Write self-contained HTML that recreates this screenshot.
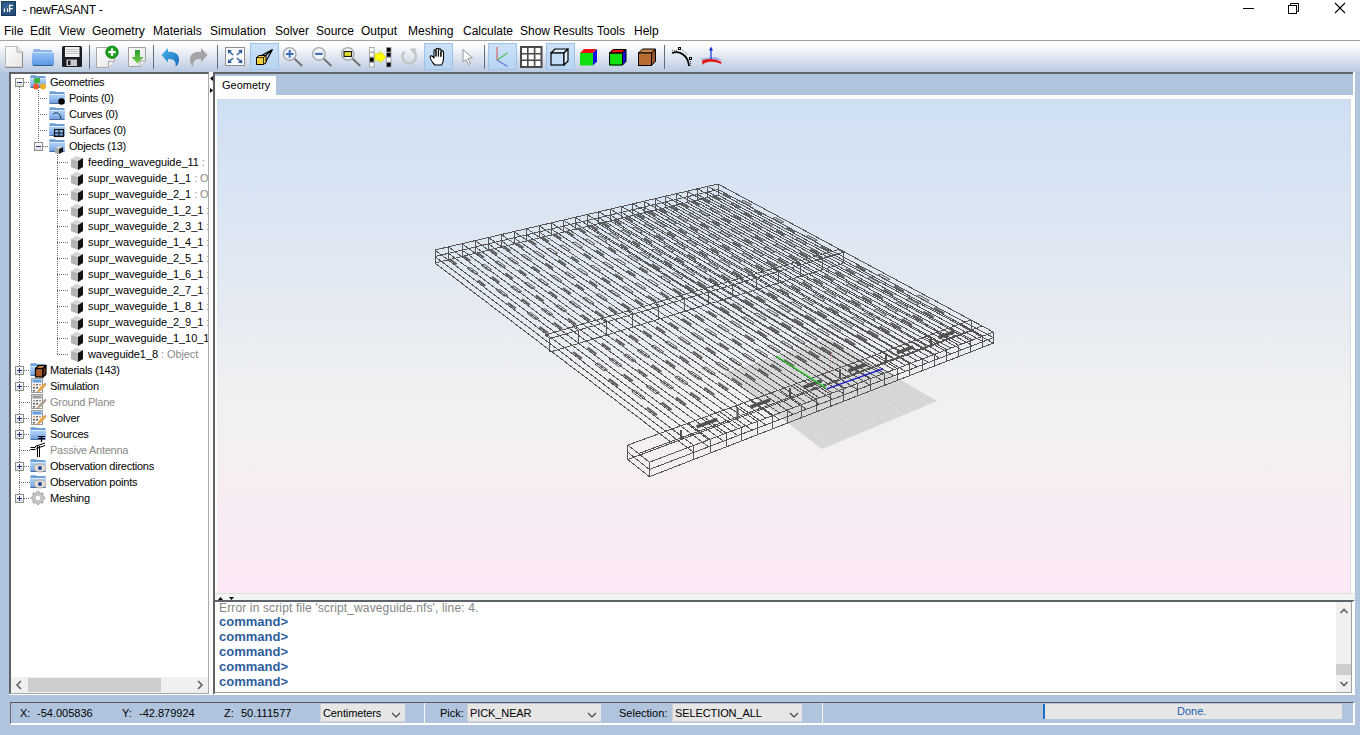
<!DOCTYPE html>
<html><head><meta charset="utf-8">
<style>
*{box-sizing:border-box;margin:0;padding:0}
html,body{width:1360px;height:735px;overflow:hidden;background:#b0c4de;font-family:"Liberation Sans",sans-serif;position:relative}
.a{position:absolute}
.t{position:absolute;white-space:pre;line-height:1}
#top{left:0;top:0;width:1360px;height:40px;background:#fff}
#sep40{left:0;top:40px;width:1360px;height:1px;background:#a0a0a0}
#tb{left:0;top:41px;width:1360px;height:31px;background:linear-gradient(#ffffff 0px,#fbfcfd 5px,#e4eaf3 14px,#c6d3e6 26px,#b9cae2 31px)}
.menu{font-size:12px;color:#000;top:25px}
.tsep{position:absolute;top:45px;width:1px;height:24px;background:#5f6f80}
.act{position:absolute;top:43px;height:27px;background:linear-gradient(#cde2f8,#b6d4f2);border:1px solid #9ec2e8}
#tree{left:9px;top:72px;width:200px;height:622px;background:#fff;border-top:2px solid #5e636a;border-left:2px solid #5e636a;border-right:1px solid #a8a8a8;border-bottom:1px solid #a8a8a8;overflow:hidden}
#split{left:209px;top:72px;width:4px;height:623px;background:#fbfbfb}
#rp{left:213px;top:72px;width:1142px;height:528px;background:#b0c4de;border-top:2px solid #5e636a;border-left:2px solid #5e636a}
#rpr{left:1353px;top:72px;width:2px;height:528px;background:#fff}
#tab{left:215px;top:76px;width:61px;height:20px;background:#fff}
#vpwrap{left:215px;top:95px;width:1138px;height:505px;background:#fff}
#vp{left:217px;top:99px;width:1133px;height:495px;background:linear-gradient(#cfdff3 0%,#d9e5f3 20%,#e4eaf2 40%,#f1f1f1 62%,#f6edf3 80%,#fde8f6 100%)}
#vpb{left:215px;top:593px;width:1140px;height:7px;background:#f4f4f4;border-top:1px solid #dedede}
#con{left:213px;top:600px;width:1142px;height:95px;background:#fff;border-top:2px solid #5e636a;border-left:2px solid #5e636a;border-right:3px solid #fff;border-bottom:2px solid #fff}
#conin{left:1351px;top:602px;width:1px;height:91px;background:#a0a0a0}
#conb{left:215px;top:692px;width:1137px;height:1px;background:#a0a0a0}
.tr{font-size:11px;color:#000;letter-spacing:-0.25px}
.g{color:#8a8a8a}
.cmd{font-size:13px;font-weight:bold;color:#2d5e9c;letter-spacing:0px;left:219px}
#status{left:10px;top:702px;width:1345px;height:23px;border-top:1px solid #5a5a5a;border-left:1px solid #6a6a6a;border-bottom:2px solid #fff;border-right:2px solid #fff}
.st{font-size:11px;color:#000;top:708px}
.combo{position:absolute;top:704px;height:18px;background:#e6e6e6;border-left:1px solid #d0d0d0;border-bottom:1px solid #d4d4d4}
.combo span{position:absolute;left:2px;top:4px;font-size:11px;white-space:pre;line-height:1;letter-spacing:-0.1px}
.combo svg{position:absolute;top:8px}
</style></head><body>
<div id="top" class="a"></div>
<!-- title -->
<svg class="a" style="left:0;top:0" width="18" height="18"><defs><radialGradient id="ig" cx="0.4" cy="0.4" r="0.7"><stop offset="0" stop-color="#3a6c9c"/><stop offset="1" stop-color="#1e4670"/></radialGradient></defs><rect x="1" y="1" width="15" height="15" fill="url(#ig)"/><rect x="1.5" y="1.5" width="14" height="14" fill="none" stroke="#1a3658" stroke-width="0.8"/><path d="M4.4 8.5 V12 M7.5 8.5 V12 M9.6 12 V5.4 H12.9 M9.6 8.6 H12.6" fill="none" stroke="#fff" stroke-width="1.2"/></svg>
<div class="t" style="left:19.5px;top:4px;font-size:12px;color:#000;letter-spacing:-0.25px"> - newFASANT -</div>
<!-- window controls -->
<svg class="a" style="left:1240px;top:0px" width="120" height="18">
 <line x1="3" y1="8.5" x2="14" y2="8.5" stroke="#000" stroke-width="1"/>
 <rect x="48.5" y="5.5" width="8" height="8" fill="none" stroke="#000"/>
 <path d="M50.5 5.5 V3.5 H58.5 V11.5 H56.5" fill="none" stroke="#000"/>
 <path d="M95 3 L105 13 M105 3 L95 13" stroke="#000" stroke-width="1.1"/>
</svg>
<!-- menu -->
<div class="t menu" style="left:4px">File</div>
<div class="t menu" style="left:30px">Edit</div>
<div class="t menu" style="left:59px">View</div>
<div class="t menu" style="left:92px">Geometry</div>
<div class="t menu" style="left:153px">Materials</div>
<div class="t menu" style="left:210px">Simulation</div>
<div class="t menu" style="left:275px">Solver</div>
<div class="t menu" style="left:316px">Source</div>
<div class="t menu" style="left:361px">Output</div>
<div class="t menu" style="left:408px">Meshing</div>
<div class="t menu" style="left:463px">Calculate</div>
<div class="t menu" style="left:520px">Show Results</div>
<div class="t menu" style="left:597px">Tools</div>
<div class="t menu" style="left:634px">Help</div>
<div id="sep40" class="a"></div>
<div id="tb" class="a"></div>
<!-- TOOLBAR -->
<div class="tsep" style="left:89px"></div>
<div class="tsep" style="left:153px"></div>
<div class="tsep" style="left:217px"></div>
<div class="tsep" style="left:484px"></div>
<div class="tsep" style="left:664px"></div>
<div class="act" style="left:250px;width:29px"></div>
<div class="act" style="left:424px;width:29px"></div>
<div class="act" style="left:488px;width:29px"></div>
<div class="act" style="left:546px;width:29px"></div>
<svg class="a" style="left:0;top:0" width="740" height="75"><defs>
<linearGradient id="tfold" x1="0" y1="0" x2="0" y2="1"><stop offset="0" stop-color="#9cc6f6"/><stop offset="1" stop-color="#5b9ae6"/></linearGradient>
<linearGradient id="tpage" x1="0" y1="0" x2="1" y2="1"><stop offset="0" stop-color="#ffffff"/><stop offset="1" stop-color="#e4e4e4"/></linearGradient>
<linearGradient id="tgreen" x1="0" y1="0" x2="0" y2="1"><stop offset="0" stop-color="#2a9a2a"/><stop offset="1" stop-color="#7ad04a"/></linearGradient>
<linearGradient id="tblue" x1="0" y1="0" x2="1" y2="1"><stop offset="0" stop-color="#4ab4ec"/><stop offset="1" stop-color="#1a6cb8"/></linearGradient>
</defs>
<path d="M5.5 46.5 H17 L22.5 52 V67 H5.5 Z" fill="url(#tpage)" stroke="#b8b8b8"/>
<path d="M22.5 52 V67.5 H5.5" fill="none" stroke="#8a8a8a" stroke-width="1"/>
<path d="M17 46.5 V52 H22.5" fill="#e8e8e8" stroke="#b0b0b0"/>
<rect x="34" y="49" width="6" height="2" fill="#8fb4e8"/><rect x="33" y="50" width="19" height="3" fill="#8fb4e8"/>
<rect x="32" y="52" width="22" height="13" fill="url(#tfold)"/><line x1="32" y1="52.5" x2="54" y2="52.5" stroke="#c8e0fc"/>
<line x1="33" y1="65.5" x2="53" y2="65.5" stroke="#3a5a88"/>
<rect x="62" y="46" width="20" height="21" rx="1.5" fill="#1c1c24"/>
<rect x="65" y="47" width="14.5" height="10" fill="#f2f2f2"/>
<path d="M66 49.5 H78.5 M66 51.5 H78.5 M66 53.5 H78.5" stroke="#c0c0c0"/>
<rect x="66.5" y="59.5" width="10.5" height="6.5" fill="#c8c8c8"/><rect x="68" y="60.5" width="2.5" height="4.5" fill="#202020"/>
<path d="M96.5 47.5 H114.5 V61 L108.5 67.5 H96.5 Z" fill="url(#tpage)" stroke="#a8a8a8"/>
<path d="M108.5 67.5 V61.5 H114.5" fill="#f4f4f4" stroke="#a8a8a8"/>
<circle cx="112" cy="52.2" r="6.2" fill="#18a018" stroke="#0c700c" stroke-width="0.8"/>
<path d="M112 48.5 V56 M108.3 52.2 H115.7" stroke="#fff" stroke-width="2.3"/>
<path d="M128.5 47.5 H145.5 V61 L140 66.5 H128.5 Z" fill="url(#tpage)" stroke="#a0a0a0"/>
<path d="M140 66.5 V61 H145.5" fill="#f0f0f0" stroke="#a8a8a8"/>
<path d="M135 50 H140 V57 H143.5 L137.5 63.5 L131.5 57 H135 Z" fill="url(#tgreen)"/>
<path d="M161.5 55 L168 48 L168 52 C175 51 180 55 179 61 C178.5 64 177 66 175.5 66.5 C176.5 62 174 58.5 168 59 L168 62.5 Z" fill="url(#tblue)"/>
<path d="M207.5 55 L201 48 L201 52 C194 51 189 55 190 61 C190.5 64 192 66 193.5 66.5 C192.5 62 195 58.5 201 59 L201 62.5 Z" fill="#a4a4a4"/>
<rect x="225.5" y="47.5" width="19" height="18" fill="#fafafa" stroke="#8c8c8c"/>
<line x1="233" y1="55" x2="228" y2="50" stroke="#3a6aa8" stroke-width="1.6"/>
<line x1="237" y1="55" x2="242" y2="50" stroke="#3a6aa8" stroke-width="1.6"/>
<line x1="233" y1="58" x2="228" y2="63" stroke="#3a6aa8" stroke-width="1.6"/>
<line x1="237" y1="58" x2="242" y2="63" stroke="#3a6aa8" stroke-width="1.6"/>
<path d="M228 50 L232 50 L228 54 Z" fill="#2a5a98"/>
<path d="M242 50 L238 50 L242 54 Z" fill="#2a5a98"/>
<path d="M228 63 L232 63 L228 59 Z" fill="#2a5a98"/>
<path d="M242 63 L238 63 L242 59 Z" fill="#2a5a98"/>
<path d="M257 58 L272.5 49.5 M264 57 L272.5 49.5 M264.5 64 L272.5 49.5" stroke="#000" stroke-width="1.2"/>
<path d="M256.5 57.5 L259 55.5 L266 55.5 L266 62.5 L263.5 64.5 L256.5 64.5 Z" fill="#f4d040" stroke="#000" stroke-width="1"/>
<path d="M256.5 57.5 H263.5 V64.5 M263.5 57.5 L266 55.5" fill="none" stroke="#000" stroke-width="0.8"/>
<line x1="294.2" y1="58.5" x2="302.2" y2="66" stroke="#707070" stroke-width="1.8"/>
<circle cx="289.7" cy="53.9" r="6.3" fill="#eef2f8" stroke="#a8a8a8" stroke-width="1.4"/>
<path d="M285.9 53.9 H293.5 M289.7 50.1 V57.7" stroke="#3a6cb4" stroke-width="2"/>
<line x1="323.4" y1="58.5" x2="331.4" y2="66" stroke="#707070" stroke-width="1.8"/>
<circle cx="318.9" cy="53.9" r="6.3" fill="#eef2f8" stroke="#a8a8a8" stroke-width="1.4"/>
<path d="M315.09999999999997 53.9 H322.7" stroke="#3a6cb4" stroke-width="2"/>
<line x1="352.3" y1="58.5" x2="360.3" y2="66" stroke="#707070" stroke-width="1.8"/>
<circle cx="347.8" cy="53.9" r="6.3" fill="#eef2f8" stroke="#a8a8a8" stroke-width="1.4"/>
<rect x="344.0" y="51.6" width="7.6" height="4.8" fill="#e4dc30" stroke="#000" stroke-width="1"/>
<rect x="369.5" y="47.5" width="4.5" height="4.5" fill="#fff" stroke="#9a9a9a" stroke-width="0.8"/><rect x="369.5" y="52.5" width="4.5" height="4.5" fill="#fff" stroke="#9a9a9a" stroke-width="0.8"/><rect x="369.5" y="57.5" width="4.5" height="4.5" fill="#000" stroke="#9a9a9a" stroke-width="0.8"/><rect x="369.5" y="62.5" width="4.5" height="4.5" fill="#fff" stroke="#9a9a9a" stroke-width="0.8"/>
<rect x="386.5" y="47.5" width="4.5" height="4.5" fill="#000" stroke="#9a9a9a" stroke-width="0.8"/><rect x="386.5" y="52.5" width="4.5" height="4.5" fill="#000" stroke="#9a9a9a" stroke-width="0.8"/><rect x="386.5" y="57.5" width="4.5" height="4.5" fill="#fff" stroke="#9a9a9a" stroke-width="0.8"/><rect x="386.5" y="62.5" width="4.5" height="4.5" fill="#000" stroke="#9a9a9a" stroke-width="0.8"/>
<path d="M375 53.5 H380 V51 L386 57 L380 63 V60.5 H375 Z" fill="#ffff00" stroke="#c8c800" stroke-width="0.5"/>
<path d="M412 50.2 A6.8 6.8 0 1 1 404.5 51.5" fill="none" stroke="#c4c4c4" stroke-width="2.4"/>
<path d="M410 48.5 L416.5 48.5 L414 54 Z" fill="#c4c4c4"/>
<path d="M433 63 C431 60 429.5 57 430.5 56 C431.5 55 433 57 434 58 V51 C434 49.5 436 49.5 436 51 V56 V49.5 C436 48 438.5 48 438.5 49.5 V56 V50 C438.5 48.5 441 48.5 441 50 V56 V52 C441 50.5 443.5 50.5 443.5 52 V59 C443.5 62 442.5 63.5 441.5 65 H435 Z" fill="#fff" stroke="#000" stroke-width="1.1" stroke-linejoin="round"/>
<path d="M436 56.5 V51 M438.4 56.5 V50.5 M440.8 57 V52" stroke="#000" stroke-width="0.9"/>
<path d="M463 49.5 V62 L466 59.5 L468.5 64.5 L470.5 63.5 L468 58.5 L472.5 58 Z" fill="#fff" stroke="#8c8c8c" stroke-width="0.9"/>
<path d="M497 60 V47" stroke="#d06868" stroke-width="1.2"/>
<path d="M497 60 L507.5 53" stroke="#50c050" stroke-width="1.2"/>
<path d="M497 60 L507.5 66.5" stroke="#6878d8" stroke-width="1.2"/>
<rect x="521" y="47" width="20.5" height="20" fill="#fff" stroke="#4a4a4a" stroke-width="2"/>
<path d="M527.8 47 V67 M534.6 47 V67 M521 53.7 H541.5 M521 60.3 H541.5" stroke="#4a4a4a" stroke-width="1.6"/>
<path d="M551 53 L555 49 H568 L564 53 Z" fill="#d8ecfc" stroke="#000" stroke-width="1.2" stroke-linejoin="round"/>
<rect x="551" y="53" width="13" height="12" fill="#c4dcf4" stroke="#000" stroke-width="1.2"/>
<path d="M564 53 L568 49 V61 L564 65 Z" fill="#e0f0fc" stroke="#000" stroke-width="1.2" stroke-linejoin="round"/>
<path d="M580 53 L584 49 H597 L593 53 Z" fill="#f01010"/><rect x="580" y="53" width="13" height="12.5" fill="#10e010"/><path d="M593 53 L597 49 V61.5 L593 65.5 Z" fill="#1010e0"/>
<path d="M609 53 L613 49 H626 L622 53 Z" fill="#f01010"/><rect x="609" y="53" width="13" height="12.5" fill="#10e010"/><path d="M622 53 L626 49 V61.5 L622 65.5 Z" fill="#1010e0"/>
<path d="M609.5 53 L613.5 49.5 H625.5 L621.5 53 Z M609.5 53 H622.5 V65 H609.5 Z M622.5 53 L626 49.5 V61.5 L622.5 65" fill="none" stroke="#000" stroke-width="1"/>
<path d="M638.5 53 L642.5 49 H655.5 L651.5 53 Z" fill="#c88850" stroke="#000" stroke-width="1" stroke-linejoin="round"/>
<rect x="638.5" y="53" width="13" height="12.5" fill="#b86c30" stroke="#000" stroke-width="1"/>
<path d="M651.5 53 L655.5 49 V61.5 L651.5 65.5 Z" fill="#985424" stroke="#000" stroke-width="1" stroke-linejoin="round"/>
<path d="M672 53 C679 50 688 55 689 66" fill="none" stroke="#000" stroke-width="1.8"/>
<rect x="678.5" y="47.5" width="2" height="2" fill="#fff" stroke="#000"/><rect x="689.5" y="57.5" width="2" height="2" fill="#fff" stroke="#000"/>
<path d="M672 50.5 H677 M682 49.5 L688 55 M690.5 61 V66" stroke="#000" stroke-width="0.6" stroke-dasharray="1 1"/>
<path d="M700 58.5 L716 57 L722 60 L706 61.5 Z" fill="#9aa8f0" opacity="0.85"/>
<path d="M702 60.5 C708 58 716 58.5 721.5 62 L721 64 C715 61 708 61 704 63.5 L702.5 65 Z" fill="#e01818"/>
<path d="M711 59 V49" stroke="#1030d0" stroke-width="1.2"/><path d="M709 50.5 L711 46.5 L713 50.5 Z" fill="#1030d0"/></svg>

<!-- TREE -->
<div id="tree" class="a"></div>
<div id="split" class="a"></div>
<div class="a" style="left:9px;top:694px;width:204px;height:1px;background:#fff"></div>
<svg class="a" style="left:0;top:0" width="360" height="735"><defs>
<linearGradient id="fg" x1="0" y1="0" x2="0" y2="1"><stop offset="0" stop-color="#b8d6f8"/><stop offset="0.5" stop-color="#94bdf0"/><stop offset="1" stop-color="#6c9ee0"/></linearGradient>
<linearGradient id="eg" x1="0" y1="0" x2="0" y2="1"><stop offset="0" stop-color="#ffffff"/><stop offset="1" stop-color="#dcdcdc"/></linearGradient>
</defs>
<line x1="19.5" y1="87" x2="19.5" y2="494" stroke="#6c6c6c" stroke-dasharray="1 1"/>
<line x1="38.5" y1="90" x2="38.5" y2="142" stroke="#6c6c6c" stroke-dasharray="1 1"/>
<line x1="57.5" y1="153" x2="57.5" y2="354" stroke="#6c6c6c" stroke-dasharray="1 1"/>
<line x1="38" y1="98.5" x2="48" y2="98.5" stroke="#6c6c6c" stroke-dasharray="1 1"/>
<line x1="38" y1="114.5" x2="48" y2="114.5" stroke="#6c6c6c" stroke-dasharray="1 1"/>
<line x1="38" y1="130.5" x2="48" y2="130.5" stroke="#6c6c6c" stroke-dasharray="1 1"/>
<line x1="43" y1="146.5" x2="48" y2="146.5" stroke="#6c6c6c" stroke-dasharray="1 1"/>
<line x1="57" y1="162.5" x2="69" y2="162.5" stroke="#6c6c6c" stroke-dasharray="1 1"/>
<line x1="57" y1="178.5" x2="69" y2="178.5" stroke="#6c6c6c" stroke-dasharray="1 1"/>
<line x1="57" y1="194.5" x2="69" y2="194.5" stroke="#6c6c6c" stroke-dasharray="1 1"/>
<line x1="57" y1="210.5" x2="69" y2="210.5" stroke="#6c6c6c" stroke-dasharray="1 1"/>
<line x1="57" y1="226.5" x2="69" y2="226.5" stroke="#6c6c6c" stroke-dasharray="1 1"/>
<line x1="57" y1="242.5" x2="69" y2="242.5" stroke="#6c6c6c" stroke-dasharray="1 1"/>
<line x1="57" y1="258.5" x2="69" y2="258.5" stroke="#6c6c6c" stroke-dasharray="1 1"/>
<line x1="57" y1="274.5" x2="69" y2="274.5" stroke="#6c6c6c" stroke-dasharray="1 1"/>
<line x1="57" y1="290.5" x2="69" y2="290.5" stroke="#6c6c6c" stroke-dasharray="1 1"/>
<line x1="57" y1="306.5" x2="69" y2="306.5" stroke="#6c6c6c" stroke-dasharray="1 1"/>
<line x1="57" y1="322.5" x2="69" y2="322.5" stroke="#6c6c6c" stroke-dasharray="1 1"/>
<line x1="57" y1="338.5" x2="69" y2="338.5" stroke="#6c6c6c" stroke-dasharray="1 1"/>
<line x1="57" y1="354.5" x2="69" y2="354.5" stroke="#6c6c6c" stroke-dasharray="1 1"/>
<line x1="24" y1="370.5" x2="30" y2="370.5" stroke="#6c6c6c" stroke-dasharray="1 1"/>
<line x1="24" y1="386.5" x2="30" y2="386.5" stroke="#6c6c6c" stroke-dasharray="1 1"/>
<line x1="19" y1="402.5" x2="30" y2="402.5" stroke="#6c6c6c" stroke-dasharray="1 1"/>
<line x1="24" y1="418.5" x2="30" y2="418.5" stroke="#6c6c6c" stroke-dasharray="1 1"/>
<line x1="24" y1="434.5" x2="30" y2="434.5" stroke="#6c6c6c" stroke-dasharray="1 1"/>
<line x1="19" y1="450.5" x2="30" y2="450.5" stroke="#6c6c6c" stroke-dasharray="1 1"/>
<line x1="24" y1="466.5" x2="30" y2="466.5" stroke="#6c6c6c" stroke-dasharray="1 1"/>
<line x1="19" y1="482.5" x2="30" y2="482.5" stroke="#6c6c6c" stroke-dasharray="1 1"/>
<line x1="24" y1="498.5" x2="30" y2="498.5" stroke="#6c6c6c" stroke-dasharray="1 1"/>
<line x1="24" y1="82.5" x2="30" y2="82.5" stroke="#6c6c6c" stroke-dasharray="1 1"/>
<rect x="15.5" y="78.5" width="8" height="8" fill="url(#eg)" stroke="#8e8f8f"/>
<line x1="17" y1="82.5" x2="22" y2="82.5" stroke="#23337a"/>
<rect x="34.5" y="142.5" width="8" height="8" fill="url(#eg)" stroke="#8e8f8f"/>
<line x1="36" y1="146.5" x2="41" y2="146.5" stroke="#23337a"/>
<rect x="15.5" y="366.5" width="8" height="8" fill="url(#eg)" stroke="#8e8f8f"/>
<line x1="17" y1="370.5" x2="22" y2="370.5" stroke="#23337a"/><line x1="19.5" y1="368" x2="19.5" y2="373" stroke="#23337a"/>
<rect x="15.5" y="382.5" width="8" height="8" fill="url(#eg)" stroke="#8e8f8f"/>
<line x1="17" y1="386.5" x2="22" y2="386.5" stroke="#23337a"/><line x1="19.5" y1="384" x2="19.5" y2="389" stroke="#23337a"/>
<rect x="15.5" y="414.5" width="8" height="8" fill="url(#eg)" stroke="#8e8f8f"/>
<line x1="17" y1="418.5" x2="22" y2="418.5" stroke="#23337a"/><line x1="19.5" y1="416" x2="19.5" y2="421" stroke="#23337a"/>
<rect x="15.5" y="430.5" width="8" height="8" fill="url(#eg)" stroke="#8e8f8f"/>
<line x1="17" y1="434.5" x2="22" y2="434.5" stroke="#23337a"/><line x1="19.5" y1="432" x2="19.5" y2="437" stroke="#23337a"/>
<rect x="15.5" y="462.5" width="8" height="8" fill="url(#eg)" stroke="#8e8f8f"/>
<line x1="17" y1="466.5" x2="22" y2="466.5" stroke="#23337a"/><line x1="19.5" y1="464" x2="19.5" y2="469" stroke="#23337a"/>
<rect x="15.5" y="494.5" width="8" height="8" fill="url(#eg)" stroke="#8e8f8f"/>
<line x1="17" y1="498.5" x2="22" y2="498.5" stroke="#23337a"/><line x1="19.5" y1="496" x2="19.5" y2="501" stroke="#23337a"/>
<g transform="translate(30,74)">
<rect x="0.5" y="1" width="6" height="2" fill="#8db6e6"/>
<rect x="0.5" y="2" width="15" height="11" fill="#6f9fd8"/>
<rect x="0.5" y="4" width="15" height="9.5" fill="url(#fg)"/>
<line x1="0.5" y1="4.5" x2="15.5" y2="4.5" stroke="#dbeafc" stroke-width="1"/>
<line x1="0.5" y1="13.5" x2="15.5" y2="13.5" stroke="#4d6d98" stroke-width="1"/>
<rect x="4" y="4" width="6" height="5" fill="#3cb43c"/>
<circle cx="6" cy="12.5" r="3" fill="#e85a28"/><circle cx="13" cy="12.5" r="3" fill="#f0b030"/></g>
<g transform="translate(49,90)">
<rect x="0.5" y="1" width="6" height="2" fill="#8db6e6"/>
<rect x="0.5" y="2" width="15" height="11" fill="#6f9fd8"/>
<rect x="0.5" y="4" width="15" height="9.5" fill="url(#fg)"/>
<line x1="0.5" y1="4.5" x2="15.5" y2="4.5" stroke="#dbeafc" stroke-width="1"/>
<line x1="0.5" y1="13.5" x2="15.5" y2="13.5" stroke="#4d6d98" stroke-width="1"/>
<circle cx="12.5" cy="11.5" r="3.2" fill="#000"/></g>
<g transform="translate(49,106)">
<rect x="0.5" y="1" width="6" height="2" fill="#8db6e6"/>
<rect x="0.5" y="2" width="15" height="11" fill="#6f9fd8"/>
<rect x="0.5" y="4" width="15" height="9.5" fill="url(#fg)"/>
<line x1="0.5" y1="4.5" x2="15.5" y2="4.5" stroke="#dbeafc" stroke-width="1"/>
<line x1="0.5" y1="13.5" x2="15.5" y2="13.5" stroke="#4d6d98" stroke-width="1"/>
<path d="M4 8 Q8 5 11 9 L12 13" fill="none" stroke="#203040" stroke-width="1"/></g>
<g transform="translate(49,122)">
<rect x="0.5" y="1" width="6" height="2" fill="#8db6e6"/>
<rect x="0.5" y="2" width="15" height="11" fill="#6f9fd8"/>
<rect x="0.5" y="4" width="15" height="9.5" fill="url(#fg)"/>
<line x1="0.5" y1="4.5" x2="15.5" y2="4.5" stroke="#dbeafc" stroke-width="1"/>
<line x1="0.5" y1="13.5" x2="15.5" y2="13.5" stroke="#4d6d98" stroke-width="1"/>
<rect x="5.5" y="7.5" width="9" height="7" fill="none" stroke="#101010" stroke-width="1.2"/><line x1="10" y1="7.5" x2="10" y2="14.5" stroke="#101010"/><line x1="5.5" y1="11" x2="14.5" y2="11" stroke="#101010"/></g>
<g transform="translate(49,138)">
<rect x="0.5" y="1" width="6" height="2" fill="#8db6e6"/>
<rect x="0.5" y="2" width="15" height="11" fill="#6f9fd8"/>
<rect x="0.5" y="4" width="15" height="9.5" fill="url(#fg)"/>
<line x1="0.5" y1="4.5" x2="15.5" y2="4.5" stroke="#dbeafc" stroke-width="1"/>
<line x1="0.5" y1="13.5" x2="15.5" y2="13.5" stroke="#4d6d98" stroke-width="1"/>
<polygon points="6,10 10,8 14,9 10,11" fill="#d8d8d8"/><polygon points="6,10 10,11 10,16 6,15" fill="#a8a8a8"/><polygon points="10,11 14,9 14,14 10,16" fill="#181818"/></g>
<g transform="translate(71,156)">
<polygon points="0,3 5,0 12,2 7,5" fill="#d6d6d6"/>
<polygon points="0,3 7,5 7,14 0,11" fill="#b4b4b4"/>
<polygon points="7,5 12,2 12,11 7,14" fill="#141414"/>
</g>
<g transform="translate(71,172)">
<polygon points="0,3 5,0 12,2 7,5" fill="#d6d6d6"/>
<polygon points="0,3 7,5 7,14 0,11" fill="#b4b4b4"/>
<polygon points="7,5 12,2 12,11 7,14" fill="#141414"/>
</g>
<g transform="translate(71,188)">
<polygon points="0,3 5,0 12,2 7,5" fill="#d6d6d6"/>
<polygon points="0,3 7,5 7,14 0,11" fill="#b4b4b4"/>
<polygon points="7,5 12,2 12,11 7,14" fill="#141414"/>
</g>
<g transform="translate(71,204)">
<polygon points="0,3 5,0 12,2 7,5" fill="#d6d6d6"/>
<polygon points="0,3 7,5 7,14 0,11" fill="#b4b4b4"/>
<polygon points="7,5 12,2 12,11 7,14" fill="#141414"/>
</g>
<g transform="translate(71,220)">
<polygon points="0,3 5,0 12,2 7,5" fill="#d6d6d6"/>
<polygon points="0,3 7,5 7,14 0,11" fill="#b4b4b4"/>
<polygon points="7,5 12,2 12,11 7,14" fill="#141414"/>
</g>
<g transform="translate(71,236)">
<polygon points="0,3 5,0 12,2 7,5" fill="#d6d6d6"/>
<polygon points="0,3 7,5 7,14 0,11" fill="#b4b4b4"/>
<polygon points="7,5 12,2 12,11 7,14" fill="#141414"/>
</g>
<g transform="translate(71,252)">
<polygon points="0,3 5,0 12,2 7,5" fill="#d6d6d6"/>
<polygon points="0,3 7,5 7,14 0,11" fill="#b4b4b4"/>
<polygon points="7,5 12,2 12,11 7,14" fill="#141414"/>
</g>
<g transform="translate(71,268)">
<polygon points="0,3 5,0 12,2 7,5" fill="#d6d6d6"/>
<polygon points="0,3 7,5 7,14 0,11" fill="#b4b4b4"/>
<polygon points="7,5 12,2 12,11 7,14" fill="#141414"/>
</g>
<g transform="translate(71,284)">
<polygon points="0,3 5,0 12,2 7,5" fill="#d6d6d6"/>
<polygon points="0,3 7,5 7,14 0,11" fill="#b4b4b4"/>
<polygon points="7,5 12,2 12,11 7,14" fill="#141414"/>
</g>
<g transform="translate(71,300)">
<polygon points="0,3 5,0 12,2 7,5" fill="#d6d6d6"/>
<polygon points="0,3 7,5 7,14 0,11" fill="#b4b4b4"/>
<polygon points="7,5 12,2 12,11 7,14" fill="#141414"/>
</g>
<g transform="translate(71,316)">
<polygon points="0,3 5,0 12,2 7,5" fill="#d6d6d6"/>
<polygon points="0,3 7,5 7,14 0,11" fill="#b4b4b4"/>
<polygon points="7,5 12,2 12,11 7,14" fill="#141414"/>
</g>
<g transform="translate(71,332)">
<polygon points="0,3 5,0 12,2 7,5" fill="#d6d6d6"/>
<polygon points="0,3 7,5 7,14 0,11" fill="#b4b4b4"/>
<polygon points="7,5 12,2 12,11 7,14" fill="#141414"/>
</g>
<g transform="translate(71,348)">
<polygon points="0,3 5,0 12,2 7,5" fill="#d6d6d6"/>
<polygon points="0,3 7,5 7,14 0,11" fill="#b4b4b4"/>
<polygon points="7,5 12,2 12,11 7,14" fill="#141414"/>
</g>
<g transform="translate(30,362)">
<rect x="0.5" y="1" width="6" height="2" fill="#8db6e6"/>
<rect x="0.5" y="2" width="15" height="11" fill="#6f9fd8"/>
<rect x="0.5" y="4" width="15" height="9.5" fill="url(#fg)"/>
<line x1="0.5" y1="4.5" x2="15.5" y2="4.5" stroke="#dbeafc" stroke-width="1"/>
<line x1="0.5" y1="13.5" x2="15.5" y2="13.5" stroke="#4d6d98" stroke-width="1"/>
<path d="M5.5 6.5 L8.5 3.5 H16 L13 6.5 Z" fill="#c88850" stroke="#000" stroke-width="1.2" stroke-linejoin="round"/><rect x="5.5" y="6.5" width="7.5" height="8.5" fill="#a85a28" stroke="#000" stroke-width="1.2"/><path d="M13 6.5 L16 3.5 V12 L13 15 Z" fill="#7a3a18" stroke="#000" stroke-width="1.2" stroke-linejoin="round"/></g>
<g transform="translate(31,378)">
<rect x="0.5" y="0.5" width="11" height="14" fill="#f4f4f4" stroke="#9c9c9c"/>
<rect x="1.5" y="1.5" width="9" height="3" fill="#5f9ee0"/>
<rect x="2" y="6" width="2" height="1.5" fill="#e09060"/><rect x="5" y="6" width="2" height="1.5" fill="#707070"/><rect x="8" y="6" width="2" height="1.5" fill="#e09060"/>
<rect x="2" y="9" width="2" height="1.5" fill="#606060"/><rect x="5" y="9" width="2" height="1.5" fill="#606060"/>
<rect x="2" y="12" width="2" height="1.5" fill="#606060"/>
<path d="M6 14.5 L8 11 L13.5 5.5 L15 7 L9.5 12.5 Z" fill="#f0a830" stroke="#b07020" stroke-width="0.4"/>
<path d="M13.5 5.5 L15 7 L15.8 6.2 L14.3 4.7Z" fill="#d090c0"/>
</g>
<g transform="translate(31,394)">
<rect x="0.5" y="0.5" width="11" height="14" fill="#f4f4f4" stroke="#9c9c9c"/>
<rect x="1.5" y="1.5" width="9" height="3" fill="#9a9a9a"/>
<rect x="2" y="6" width="2" height="1.5" fill="#9a9a9a"/><rect x="5" y="6" width="2" height="1.5" fill="#707070"/><rect x="8" y="6" width="2" height="1.5" fill="#9a9a9a"/>
<rect x="2" y="9" width="2" height="1.5" fill="#606060"/><rect x="5" y="9" width="2" height="1.5" fill="#606060"/>
<rect x="2" y="12" width="2" height="1.5" fill="#606060"/>
<path d="M6 14.5 L8 11 L13.5 5.5 L15 7 L9.5 12.5 Z" fill="#a8a8a8" stroke="#b07020" stroke-width="0.4"/>
<path d="M13.5 5.5 L15 7 L15.8 6.2 L14.3 4.7Z" fill="#d090c0"/>
</g>
<g transform="translate(31,410)">
<rect x="0.5" y="0.5" width="11" height="14" fill="#f4f4f4" stroke="#9c9c9c"/>
<rect x="1.5" y="1.5" width="9" height="3" fill="#5f9ee0"/>
<rect x="2" y="6" width="2" height="1.5" fill="#e09060"/><rect x="5" y="6" width="2" height="1.5" fill="#707070"/><rect x="8" y="6" width="2" height="1.5" fill="#e09060"/>
<rect x="2" y="9" width="2" height="1.5" fill="#606060"/><rect x="5" y="9" width="2" height="1.5" fill="#606060"/>
<rect x="2" y="12" width="2" height="1.5" fill="#606060"/>
<path d="M6 14.5 L8 11 L13.5 5.5 L15 7 L9.5 12.5 Z" fill="#f0a830" stroke="#b07020" stroke-width="0.4"/>
<path d="M13.5 5.5 L15 7 L15.8 6.2 L14.3 4.7Z" fill="#d090c0"/>
</g>
<g transform="translate(30,426)">
<rect x="0.5" y="1" width="6" height="2" fill="#8db6e6"/>
<rect x="0.5" y="2" width="15" height="11" fill="#6f9fd8"/>
<rect x="0.5" y="4" width="15" height="9.5" fill="url(#fg)"/>
<line x1="0.5" y1="4.5" x2="15.5" y2="4.5" stroke="#dbeafc" stroke-width="1"/>
<line x1="0.5" y1="13.5" x2="15.5" y2="13.5" stroke="#4d6d98" stroke-width="1"/>
<path d="M8 10.5 H15 M8 12.5 H15 M11.5 10 V16" stroke="#000" stroke-width="1.2"/></g>
<path d="M30.5 447.5 H35.5 M30.5 449.5 H35.5 M35 446.5 L45 443 M36 448.5 L45 445.5 M37.5 446 V457 M39.5 446 V457" stroke="#000" stroke-width="1" fill="none"/>
<g transform="translate(30,458)">
<rect x="0.5" y="1" width="6" height="2" fill="#8db6e6"/>
<rect x="0.5" y="2" width="15" height="11" fill="#6f9fd8"/>
<rect x="0.5" y="4" width="15" height="9.5" fill="url(#fg)"/>
<line x1="0.5" y1="4.5" x2="15.5" y2="4.5" stroke="#dbeafc" stroke-width="1"/>
<line x1="0.5" y1="13.5" x2="15.5" y2="13.5" stroke="#4d6d98" stroke-width="1"/>
<ellipse cx="10" cy="10" rx="6" ry="4" fill="#e8e0d8" stroke="#b0a090" stroke-width="0.8"/><circle cx="10" cy="10" r="2.2" fill="#4868b8"/><circle cx="10" cy="10" r="0.9" fill="#102040"/></g>
<g transform="translate(30,474)">
<rect x="0.5" y="1" width="6" height="2" fill="#8db6e6"/>
<rect x="0.5" y="2" width="15" height="11" fill="#6f9fd8"/>
<rect x="0.5" y="4" width="15" height="9.5" fill="url(#fg)"/>
<line x1="0.5" y1="4.5" x2="15.5" y2="4.5" stroke="#dbeafc" stroke-width="1"/>
<line x1="0.5" y1="13.5" x2="15.5" y2="13.5" stroke="#4d6d98" stroke-width="1"/>
<ellipse cx="10" cy="10" rx="6" ry="4" fill="#e8e0d8" stroke="#b0a090" stroke-width="0.8"/><circle cx="10" cy="10" r="2.2" fill="#4868b8"/><circle cx="10" cy="10" r="0.9" fill="#102040"/></g>
<g transform="translate(30,490)"><polygon points="15.20,8.00 12.80,9.99 13.09,13.09 9.99,12.80 8.00,15.20 6.01,12.80 2.91,13.09 3.20,9.99 0.80,8.00 3.20,6.01 2.91,2.91 6.01,3.20 8.00,0.80 9.99,3.20 13.09,2.91 12.80,6.01" fill="#c4c4c4" stroke="#9a9a9a" stroke-width="0.8" stroke-linejoin="round"/><circle cx="8" cy="8" r="2.3" fill="#fff"/></g>
<rect x="11" y="677" width="197" height="16" fill="#f0f0f0"/>
<rect x="28" y="678" width="133" height="14" fill="#cdcdcd"/>
<path d="M21 681 L17 685 L21 689" fill="none" stroke="#606060" stroke-width="1.6"/>
<path d="M198 681 L202 685 L198 689" fill="none" stroke="#606060" stroke-width="1.6"/>
<path d="M213 76 L210 78.5 L213 81 Z" fill="#000"/><path d="M210 88 L213 90.5 L210 93 Z" fill="#000"/></svg>
<div class="a" style="left:11px;top:74px;width:197px;height:603px;overflow:hidden">
<div class="t tr" style="left:39px;top:3px">Geometries</div>
<div class="t tr" style="left:58px;top:19px">Points (0)</div>
<div class="t tr" style="left:58px;top:35px">Curves (0)</div>
<div class="t tr" style="left:58px;top:51px">Surfaces (0)</div>
<div class="t tr" style="left:58px;top:67px">Objects (13)</div>
<div class="t tr" style="left:77px;top:83px;letter-spacing:-0.08px">feeding_waveguide_11<span class="g"> :</span></div>
<div class="t tr" style="left:77px;top:99px;letter-spacing:-0.08px">supr_waveguide_1_1<span class="g"> : Object</span></div>
<div class="t tr" style="left:77px;top:115px;letter-spacing:-0.08px">supr_waveguide_2_1<span class="g"> : Object</span></div>
<div class="t tr" style="left:77px;top:131px;letter-spacing:-0.08px">supr_waveguide_1_2_1<span class="g"> : Object</span></div>
<div class="t tr" style="left:77px;top:147px;letter-spacing:-0.08px">supr_waveguide_2_3_1<span class="g"> : Object</span></div>
<div class="t tr" style="left:77px;top:163px;letter-spacing:-0.08px">supr_waveguide_1_4_1<span class="g"> : Object</span></div>
<div class="t tr" style="left:77px;top:179px;letter-spacing:-0.08px">supr_waveguide_2_5_1<span class="g"> : Object</span></div>
<div class="t tr" style="left:77px;top:195px;letter-spacing:-0.08px">supr_waveguide_1_6_1<span class="g"> : Object</span></div>
<div class="t tr" style="left:77px;top:211px;letter-spacing:-0.08px">supr_waveguide_2_7_1<span class="g"> : Object</span></div>
<div class="t tr" style="left:77px;top:227px;letter-spacing:-0.08px">supr_waveguide_1_8_1<span class="g"> : Object</span></div>
<div class="t tr" style="left:77px;top:243px;letter-spacing:-0.08px">supr_waveguide_2_9_1<span class="g"> : Object</span></div>
<div class="t tr" style="left:77px;top:259px;letter-spacing:-0.08px">supr_waveguide_1_10_1<span class="g"> : Object</span></div>
<div class="t tr" style="left:77px;top:275px;letter-spacing:-0.08px">waveguide1_8<span class="g"> : Object</span></div>
<div class="t tr" style="left:39px;top:291px">Materials (143)</div>
<div class="t tr" style="left:39px;top:307px">Simulation</div>
<div class="t tr g" style="left:39px;top:323px">Ground Plane</div>
<div class="t tr" style="left:39px;top:339px">Solver</div>
<div class="t tr" style="left:39px;top:355px">Sources</div>
<div class="t tr g" style="left:39px;top:371px">Passive Antenna</div>
<div class="t tr" style="left:39px;top:387px">Observation directions</div>
<div class="t tr" style="left:39px;top:403px">Observation points</div>
<div class="t tr" style="left:39px;top:419px">Meshing</div>
</div>
<!-- RIGHT PANEL -->
<div id="rp" class="a"></div>
<div id="rpr" class="a"></div>
<div id="vpwrap" class="a"></div>
<div id="tab" class="a"></div>
<div class="t" style="left:222px;top:80px;font-size:11px">Geometry</div>
<div id="vp" class="a"></div>
<div class="a" style="left:1350px;top:99px;width:1px;height:495px;background:#dadada"></div>
<svg class="a" style="left:0;top:0" width="1360" height="600"><polygon points="723,373.5 828,338 937,401 822,449" fill="#c4c4c4" opacity="0.6"/>
<path d="M730.5 371.0L830.2 445.6M738.0 368.4L838.4 442.1M745.5 365.9L846.6 438.7M753.0 363.4L854.9 435.3M760.5 360.8L863.1 431.9M768.0 358.3L871.3 428.4M775.5 355.8L879.5 425.0M783.0 353.2L887.7 421.6M790.5 350.7L895.9 418.1M798.0 348.1L904.1 414.7M805.5 345.6L912.4 411.3M813.0 343.1L920.6 407.9M820.5 340.5L928.8 404.4" stroke="#f4f4f4" stroke-width="0.8" stroke-dasharray="1 3" fill="none" opacity="0.8"/>
<path d="M435.0 250.0L718.0 184.0M435.0 256.5L718.0 189.5M435.0 263.0L718.0 195.0M435.0 250.0L435.0 263.0M448.6 246.8L448.6 259.7M462.1 243.7L462.1 256.5M475.3 240.6L475.3 253.3M488.4 237.5L488.4 250.2M501.3 234.5L501.3 247.1M514.1 231.6L514.1 244.1M526.6 228.6L526.6 241.0M539.0 225.7L539.0 238.1M551.3 222.9L551.3 235.1M563.4 220.1L563.4 232.2M575.4 217.3L575.4 229.4M587.2 214.5L587.2 226.5M598.8 211.8L598.8 223.7M610.3 209.1L610.3 220.9M621.7 206.5L621.7 218.2M632.9 203.8L632.9 215.5M644.0 201.3L644.0 212.8M655.0 198.7L655.0 210.2M665.8 196.2L665.8 207.6M676.5 193.7L676.5 205.0M687.0 191.2L687.0 202.5M697.5 188.8L697.5 200.0M707.8 186.4L707.8 197.5M718.0 184.0L718.0 195.0M435.0 250.0L693.8 445.4M435.0 256.5L693.8 452.5M435.0 263.0L672.0 443.0M448.6 246.8L708.7 439.8M448.6 253.3L708.7 446.8M462.1 243.7L723.4 434.2M462.1 250.1L723.4 441.2M475.3 240.6L737.8 428.8M475.3 247.0L737.8 435.6M488.4 237.5L752.0 423.4M488.4 243.9L752.0 430.2M501.3 234.5L765.9 418.1M501.3 240.8L765.9 424.9M514.1 231.6L779.6 413.0M514.1 237.8L779.6 419.6M526.6 228.6L793.1 407.8M526.6 234.8L793.1 414.4M539.0 225.7L806.4 402.8M539.0 231.9L806.4 409.3M551.3 222.9L819.5 397.9M551.3 229.0L819.5 404.3M563.4 220.1L832.4 393.0M563.4 226.1L832.4 399.4M575.4 217.3L845.0 388.2M575.4 223.3L845.0 394.5M587.2 214.5L857.5 383.5M587.2 220.5L857.5 389.7M587.2 226.5L835.2 382.0M598.8 211.8L869.8 378.8M598.8 217.8L869.8 385.0M598.8 223.7L847.4 377.4M610.3 209.1L881.9 374.3M610.3 215.0L881.9 380.4M610.3 220.9L859.5 372.9M621.7 206.5L893.8 369.7M621.7 212.3L893.8 375.8M621.7 218.2L871.4 368.4M632.9 203.8L905.5 365.3M632.9 209.7L905.5 371.3M632.9 215.5L883.1 364.0M644.0 201.3L917.1 360.9M644.0 207.1L917.1 366.9M644.0 212.8L894.7 359.7M655.0 198.7L928.5 356.6M655.0 204.5L928.5 362.5M655.0 210.2L906.1 355.4M665.8 196.2L939.7 352.4M665.8 201.9L939.7 358.2M665.8 207.6L917.3 351.2M676.5 193.7L950.8 348.2M676.5 199.4L950.8 354.0M676.5 205.0L928.3 347.1M687.0 191.2L961.7 344.1M687.0 196.8L961.7 349.8M687.0 202.5L939.2 343.0M697.5 188.8L972.4 340.0M697.5 194.4L972.4 345.6M697.5 200.0L950.0 338.9M707.8 186.4L983.0 336.0M707.8 191.9L983.0 341.6M707.8 197.5L960.6 334.9M718.0 184.0L993.4 332.1M718.0 189.5L993.4 337.6M718.0 195.0L971.0 331.0M545.1 335.0L838.2 249.7M549.9 338.6L843.3 252.4M549.9 352.1L843.3 263.4M549.9 338.6L549.9 352.1M545.1 335.0L549.9 338.6M578.4 330.2L578.4 343.6M573.5 326.7L578.4 330.2M606.0 322.1L606.0 335.2M601.1 318.7L606.0 322.1M632.8 314.2L632.8 327.1M627.9 310.9L632.8 314.2M658.9 306.6L658.9 319.3M654.0 303.3L658.9 306.6M684.2 299.1L684.2 311.6M679.3 295.9L684.2 299.1M708.8 291.9L708.8 304.2M703.8 288.8L708.8 291.9M732.8 284.9L732.8 296.9M727.8 281.8L732.8 284.9M756.1 278.0L756.1 289.9M751.1 275.0L756.1 278.0M778.8 271.4L778.8 283.0M773.7 268.4L778.8 271.4M800.8 264.9L800.8 276.3M795.8 262.0L800.8 264.9M822.4 258.5L822.4 269.8M817.3 255.8L822.4 258.5M843.3 252.4L843.3 263.4M838.2 249.7L843.3 252.4M627.8 445.1L971.0 320.0M649.4 462.2L993.4 332.1M649.4 476.7L993.4 343.1M649.4 469.5L993.4 337.6M627.8 459.5L971.0 331.0M638.5 453.6L982.1 326.0M627.8 445.1L649.4 462.2M627.8 459.5L649.4 476.7M627.8 452.3L649.4 469.5M627.8 445.1L627.8 459.5M649.4 462.2L649.4 476.7M971.0 320.0L993.4 332.1M971.0 331.0L993.4 343.1M971.0 325.5L993.4 337.6M971.0 320.0L971.0 331.0M993.4 332.1L993.4 343.1M693.8 445.4L693.8 459.5M672.0 429.0L693.8 445.4M710.0 439.3L710.0 453.2M688.2 423.1L710.0 439.3M726.0 433.2L726.0 447.0M704.1 417.3L726.0 433.2M741.7 427.3L741.7 441.0M719.7 411.6L741.7 427.3M757.1 421.5L757.1 435.0M735.0 406.0L757.1 421.5M772.2 415.8L772.2 429.1M750.1 400.5L772.2 415.8M787.0 410.2L787.0 423.4M764.9 395.1L787.0 410.2M801.6 404.6L801.6 417.7M779.4 389.8L801.6 404.6M816.0 399.2L816.0 412.2M793.7 384.6L816.0 399.2M830.1 393.9L830.1 406.7M807.8 379.5L830.1 393.9M843.9 388.6L843.9 401.3M821.6 374.5L843.9 388.6M857.5 383.5L857.5 396.0M835.2 369.5L857.5 383.5M870.9 378.4L870.9 390.8M848.5 364.6L870.9 378.4M884.1 373.4L884.1 385.7M861.7 359.8L884.1 373.4M897.0 368.5L897.0 380.6M874.6 355.1L897.0 368.5M909.8 363.7L909.8 375.7M887.3 350.5L909.8 363.7M922.3 359.0L922.3 370.8M899.9 345.9L922.3 359.0M934.6 354.3L934.6 366.0M912.2 341.4L934.6 354.3M946.8 349.7L946.8 361.3M924.3 337.0L946.8 349.7M958.7 345.2L958.7 356.6M936.3 332.7L958.7 345.2M970.5 340.7L970.5 352.0M948.0 328.4L970.5 340.7M982.0 336.4L982.0 347.5M959.6 324.2L982.0 336.4M993.4 332.1L993.4 343.1M971.0 320.0L993.4 332.1" stroke="#555" stroke-width="1" fill="none" shape-rendering="crispEdges"/>
<path d="M449.7 259.0L456.6 264.3M478.0 280.4L485.3 285.9M507.9 302.9L515.7 308.7M539.6 326.8L547.8 333.0M573.2 352.1L582.0 358.7M609.0 379.0L618.2 386.0M647.0 407.7L656.9 415.1M463.4 255.8L470.3 260.9M491.8 276.8L499.2 282.3M522.0 299.1L529.7 304.9M553.8 322.7L562.1 328.8M587.6 347.7L596.4 354.2M623.5 374.3L632.8 381.2M661.7 402.5L671.6 409.9M476.8 252.5L483.9 257.6M505.5 273.4L512.9 278.8M535.8 295.4L543.6 301.1M567.8 318.7L576.1 324.7M601.8 343.4L610.6 349.8M637.8 369.6L647.2 376.4M676.2 397.5L686.1 404.8M490.2 249.3L497.2 254.4M519.0 270.0L526.4 275.3M549.4 291.7L557.3 297.4M581.6 314.8L590.0 320.7M615.7 339.2L624.6 345.5M651.9 365.0L661.3 371.8M690.4 392.6L700.4 399.7M503.3 246.2L510.4 251.2M532.3 266.6L539.8 271.9M562.9 288.1L570.8 293.7M595.2 310.9L603.6 316.8M629.5 335.0L638.3 341.2M665.8 360.5L675.2 367.2M704.4 387.7L714.4 394.8M516.2 243.1L523.4 248.0M545.4 263.3L552.9 268.5M576.1 284.5L584.1 290.1M608.6 307.0L617.0 312.9M643.0 330.8L651.9 337.0M679.5 356.1L688.9 362.6M718.2 382.9L728.3 389.9M529.0 240.0L536.2 244.9M558.3 260.0L565.9 265.1M589.2 281.0L597.2 286.5M621.8 303.3L630.3 309.0M656.3 326.8L665.3 332.9M692.9 351.7L702.4 358.2M731.8 378.2L741.9 385.1M541.7 237.0L548.9 241.9M571.1 256.7L578.7 261.8M602.1 277.6L610.1 282.9M634.8 299.5L643.3 305.2M669.5 322.8L678.5 328.8M706.2 347.4L715.7 353.8M745.1 373.5L755.3 380.3M554.1 234.0L561.3 238.8M583.7 253.6L591.3 258.6M614.8 274.1L622.9 279.5M647.7 295.9L656.2 301.5M682.4 318.8L691.4 324.8M719.3 343.2L728.8 349.5M758.3 369.0L768.4 375.7M566.4 231.1L573.7 235.8M596.1 250.4L603.7 255.4M627.3 270.8L635.4 276.0M660.3 292.2L668.9 297.8M695.2 314.9L704.2 320.8M732.1 339.0L741.7 345.2M771.3 364.5L781.4 371.1M578.5 228.2L585.8 232.9M608.3 247.3L616.0 252.2M639.7 267.4L647.8 272.6M672.8 288.7L681.4 294.2M707.8 311.1L716.8 316.9M744.8 334.9L754.4 341.0M784.0 360.0L794.2 366.5M590.5 225.3L597.8 230.0M620.4 244.2L628.1 249.1M651.9 264.1L660.1 269.3M685.1 285.2L693.7 290.6M720.2 307.3L729.3 313.1M757.3 330.8L766.9 336.9M796.6 355.6L806.8 362.1M602.3 222.5L609.7 227.1M632.4 241.2L640.1 246.0M664.0 260.9L672.1 266.0M697.3 281.7L705.9 287.1M732.4 303.6L741.5 309.3M769.6 326.8L779.2 332.8M809.0 351.3L819.2 357.7M614.0 219.7L621.4 224.2M644.1 238.2L651.9 243.0M675.8 257.7L684.0 262.7M709.2 278.3L717.9 283.6M744.5 299.9L753.6 305.5M781.7 322.8L791.4 328.8M821.2 347.1L831.4 353.4M625.6 216.9L633.0 221.4M655.8 235.3L663.6 240.0M687.6 254.6L695.8 259.5M721.1 274.9L729.7 280.1M756.4 296.3L765.5 301.9M793.7 319.0L803.4 324.8M833.2 342.9L843.4 349.1M636.9 214.2L644.4 218.7M667.3 232.3L675.1 237.0M699.1 251.4L707.4 256.4M732.7 271.5L741.4 276.7M768.1 292.7L777.3 298.2M805.5 315.1L815.2 320.9M845.0 338.8L855.3 344.9M648.2 211.5L655.7 215.9M678.6 229.5L686.4 234.1M710.6 248.4L718.8 253.2M744.2 268.3L752.9 273.4M779.7 289.2L788.8 294.6M817.1 311.3L826.8 317.1M856.7 334.7L867.0 340.8M659.3 208.8L666.8 213.2M689.8 226.6L697.7 231.2M721.8 245.3L730.1 250.2M755.6 265.0L764.3 270.1M791.1 285.7L800.3 291.1M828.6 307.6L838.3 313.3M868.2 330.7L878.5 336.7M670.3 206.2L677.8 210.5M700.8 223.8L708.7 228.4M733.0 242.3L741.2 247.1M766.8 261.8L775.5 266.8M802.3 282.3L811.5 287.6M839.9 303.9L849.6 309.5M879.5 326.8L889.8 332.7M681.1 203.6L688.6 207.9M711.8 221.1L719.7 225.6M744.0 239.4L752.3 244.1M777.8 258.6L786.5 263.6M813.4 278.9L822.7 284.2M851.0 300.3L860.7 305.9M890.7 322.9L901.0 328.8M691.8 201.1L699.4 205.3M722.5 218.3L730.5 222.8M754.8 236.5L763.1 241.1M788.7 255.5L797.5 260.4M824.4 275.6L833.6 280.8M862.0 296.8L871.8 302.2M901.7 319.1L912.0 324.9M702.4 198.5L710.0 202.7M733.2 215.6L741.1 220.0M765.5 233.6L773.8 238.2M799.5 252.4L808.2 257.3M835.2 272.3L844.4 277.4M872.9 293.2L882.6 298.6M912.6 315.3L922.9 321.0M712.9 196.0L720.4 200.2M743.7 213.0L751.7 217.3M776.1 230.7L784.4 235.3M810.1 249.4L818.9 254.2M845.9 269.1L855.1 274.1M883.6 289.7L893.3 295.1M923.3 311.6L933.6 317.2M723.2 193.5L730.8 197.7M754.1 210.3L762.1 214.6M786.5 227.9L794.9 232.5M820.6 246.4L829.4 251.2M856.4 265.8L865.7 270.9M894.1 286.3L903.9 291.6M933.9 307.9L944.2 313.5" stroke="#606060" stroke-width="2.2" fill="none"/>
<path d="M467.5 268.6L470.8 267.8L478.0 273.1L474.7 273.9ZM496.7 290.4L500.0 289.6L507.6 295.2L504.2 296.1ZM527.5 313.6L530.9 312.6L538.9 318.6L535.5 319.5ZM594.9 364.1L598.4 363.0L607.4 369.7L603.9 370.8ZM631.8 391.7L635.3 390.5L644.9 397.7L641.4 398.9ZM481.2 265.2L484.5 264.4L491.7 269.7L488.4 270.5ZM510.6 286.8L513.9 286.0L521.5 291.5L518.1 292.4ZM541.6 309.7L544.9 308.7L553.0 314.6L549.6 315.6ZM609.3 359.5L612.7 358.5L621.8 365.1L618.3 366.2ZM646.4 386.8L649.8 385.7L659.5 392.7L656.0 393.9ZM494.8 261.9L498.0 261.1L505.2 266.3L502.0 267.1ZM524.3 283.2L527.5 282.4L535.2 287.9L531.9 288.8ZM555.4 305.8L558.7 304.9L566.8 310.7L563.5 311.7ZM623.5 355.1L626.8 354.0L635.9 360.6L632.6 361.7ZM660.7 382.0L664.1 380.9L673.8 387.8L670.4 389.0ZM508.1 258.6L511.3 257.8L518.5 263.0L515.4 263.8ZM537.8 279.7L541.0 278.9L548.6 284.3L545.4 285.2ZM569.1 302.0L572.3 301.1L580.5 306.9L577.2 307.8ZM637.4 350.7L640.8 349.6L649.9 356.1L646.6 357.2ZM674.8 377.3L678.1 376.1L687.9 383.0L684.5 384.2ZM521.3 255.4L524.4 254.6L531.7 259.7L528.6 260.5ZM551.1 276.2L554.2 275.4L562.0 280.8L558.8 281.6ZM582.6 298.3L585.8 297.4L593.9 303.1L590.7 304.0ZM651.2 346.4L654.5 345.3L663.6 351.7L660.4 352.8ZM688.7 372.6L692.0 371.5L701.7 378.3L698.4 379.4ZM534.2 252.2L537.3 251.4L544.7 256.4L541.6 257.2ZM564.2 272.8L567.3 272.0L575.1 277.3L571.9 278.1ZM595.8 294.6L599.0 293.7L607.2 299.4L604.0 300.3ZM664.7 342.1L668.0 341.1L677.2 347.4L673.9 348.4ZM702.3 368.0L705.6 366.9L715.4 373.6L712.1 374.7ZM547.0 249.0L550.1 248.2L557.5 253.2L554.4 254.0ZM577.2 269.4L580.2 268.6L588.0 273.9L584.9 274.7ZM608.9 291.0L612.0 290.1L620.3 295.7L617.1 296.6ZM678.1 337.9L681.3 336.9L690.5 343.1L687.3 344.2ZM715.8 363.5L719.0 362.4L728.8 369.0L725.6 370.1ZM559.7 245.9L562.7 245.1L570.1 250.1L567.1 250.8ZM589.9 266.1L593.0 265.3L600.8 270.5L597.7 271.3ZM621.8 287.4L624.9 286.5L633.2 292.0L630.1 292.9ZM691.2 333.8L694.4 332.8L703.6 338.9L700.5 339.9ZM729.1 359.0L732.2 358.0L742.0 364.5L738.9 365.6ZM572.2 242.8L575.1 242.1L582.6 247.0L579.6 247.7ZM602.5 262.8L605.5 262.0L613.4 267.2L610.4 268.0ZM634.6 283.9L637.6 283.0L645.9 288.5L642.8 289.3ZM704.2 329.7L707.3 328.7L716.6 334.8L713.5 335.8ZM742.1 354.6L745.2 353.6L755.1 360.1L752.0 361.1ZM584.5 239.8L587.4 239.1L594.9 243.9L591.9 244.6ZM615.0 259.5L617.9 258.8L625.8 263.9L622.8 264.7ZM647.1 280.4L650.1 279.6L658.4 284.9L655.4 285.8ZM717.0 325.7L720.0 324.7L729.3 330.7L726.3 331.7ZM755.0 350.3L758.0 349.3L767.9 355.7L764.8 356.7ZM596.6 236.8L599.5 236.1L607.0 240.9L604.1 241.6ZM627.2 256.3L630.2 255.6L638.1 260.6L635.1 261.4ZM659.5 277.0L662.4 276.1L670.8 281.4L667.8 282.3ZM729.5 321.7L732.5 320.8L741.9 326.7L738.9 327.7ZM767.6 346.1L770.7 345.1L780.5 351.3L777.5 352.4ZM608.6 233.8L611.5 233.1L619.0 237.9L616.2 238.6ZM639.3 253.2L642.2 252.4L650.2 257.4L647.3 258.2ZM671.7 273.6L674.6 272.8L683.0 278.0L680.1 278.8ZM741.9 317.8L744.9 316.9L754.2 322.8L751.3 323.7ZM780.1 341.9L783.1 340.9L793.0 347.1L790.0 348.1ZM620.5 230.9L623.3 230.2L630.8 234.9L628.0 235.6ZM651.3 250.1L654.1 249.3L662.1 254.2L659.2 255.0ZM683.7 270.2L686.6 269.4L695.0 274.6L692.1 275.4ZM754.2 314.0L757.1 313.1L766.4 318.9L763.5 319.8ZM792.4 337.7L795.3 336.8L805.3 342.9L802.3 343.9ZM632.2 228.0L634.9 227.3L642.5 232.0L639.7 232.7ZM663.1 247.0L665.9 246.2L673.9 251.1L671.1 251.9ZM695.6 266.9L698.5 266.1L706.9 271.3L704.0 272.1ZM766.2 310.2L769.1 309.3L778.5 315.0L775.6 315.9ZM804.5 333.7L807.4 332.7L817.4 338.8L814.5 339.7ZM643.7 225.2L646.4 224.5L654.1 229.1L651.3 229.8ZM674.7 243.9L677.5 243.2L685.5 248.0L682.7 248.8ZM707.4 263.7L710.1 262.9L718.6 268.0L715.8 268.8ZM778.1 306.4L780.9 305.5L790.3 311.2L787.5 312.1ZM816.5 329.7L819.3 328.7L829.3 334.7L826.4 335.7ZM655.1 222.4L657.8 221.7L665.4 226.3L662.7 226.9ZM686.2 240.9L688.9 240.2L697.0 245.0L694.2 245.7ZM718.9 260.5L721.7 259.7L730.1 264.7L727.4 265.5ZM789.8 302.8L792.6 301.9L802.0 307.5L799.2 308.4ZM828.3 325.7L831.1 324.8L841.0 330.7L838.2 331.6ZM666.3 219.6L669.0 218.9L676.7 223.4L674.0 224.1ZM697.5 238.0L700.2 237.3L708.3 242.0L705.6 242.7ZM730.3 257.3L733.1 256.5L741.5 261.5L738.8 262.3ZM801.4 299.1L804.1 298.3L813.5 303.8L810.8 304.7ZM839.9 321.8L842.6 320.9L852.6 326.7L849.8 327.7ZM677.5 216.9L680.1 216.2L687.8 220.7L685.1 221.3ZM708.7 235.1L711.4 234.4L719.5 239.0L716.8 239.7ZM741.6 254.2L744.3 253.4L752.8 258.4L750.1 259.1ZM812.8 295.5L815.5 294.7L824.9 300.2L822.2 301.0ZM851.3 318.0L854.0 317.0L864.0 322.8L861.3 323.8ZM688.4 214.2L691.1 213.5L698.7 217.9L696.1 218.6ZM719.8 232.2L722.4 231.5L730.5 236.1L727.9 236.8ZM752.7 251.1L755.4 250.4L763.9 255.2L761.2 256.0ZM824.0 292.0L826.7 291.2L836.1 296.6L833.4 297.4ZM862.6 314.2L865.3 313.3L875.2 319.0L872.6 319.9ZM699.3 211.5L701.9 210.9L709.6 215.2L707.0 215.9ZM730.7 229.3L733.3 228.6L741.4 233.2L738.8 233.9ZM763.7 248.0L766.3 247.3L774.9 252.1L772.2 252.9ZM835.1 288.5L837.7 287.7L847.2 293.0L844.5 293.9ZM873.7 310.4L876.3 309.5L886.3 315.2L883.7 316.1ZM710.0 208.9L712.5 208.2L720.3 212.5L717.7 213.2ZM741.5 226.5L744.0 225.8L752.2 230.4L749.6 231.0ZM774.6 245.0L777.1 244.3L785.7 249.1L783.1 249.8ZM846.0 285.1L848.6 284.3L858.1 289.5L855.5 290.4ZM884.7 306.7L887.3 305.9L897.3 311.4L894.7 312.3ZM720.6 206.2L723.1 205.6L730.8 209.9L728.3 210.5ZM752.1 223.7L754.7 223.1L762.8 227.5L760.3 228.2ZM785.3 242.1L787.8 241.4L796.4 246.1L793.8 246.8ZM856.8 281.7L859.4 280.9L868.8 286.1L866.3 286.9ZM895.5 303.1L898.1 302.2L908.1 307.8L905.5 308.6ZM731.0 203.7L733.5 203.1L741.3 207.3L738.8 207.9ZM762.6 221.0L765.1 220.3L773.3 224.8L770.8 225.4ZM795.8 239.1L798.3 238.4L806.9 243.1L804.4 243.8ZM867.4 278.3L870.0 277.5L879.5 282.7L876.9 283.5ZM906.1 299.5L908.7 298.7L918.7 304.1L916.2 305.0ZM741.4 201.1L743.8 200.5L751.6 204.7L749.1 205.3ZM773.0 218.3L775.5 217.6L783.7 222.0L781.2 222.7ZM806.3 236.2L808.7 235.6L817.3 240.2L814.8 240.9ZM877.9 275.0L880.4 274.2L889.9 279.4L887.4 280.2ZM916.7 296.0L919.2 295.1L929.2 300.5L926.7 301.4Z" stroke="#555" stroke-width="1" fill="none"/>
<path d="M696.6 426.9L717.3 419.3M750.5 407.0L770.0 399.9M803.5 387.5L821.8 380.7M848.4 370.9L865.7 364.5M897.0 352.9L913.3 346.9M938.3 337.6L953.8 331.9" stroke="#505050" stroke-width="3.5" fill="none"/>
<path d="M737.5 408.0L737.5 418.0M790.0 388.0L790.0 398.0M840.0 369.0L840.0 379.0M886.0 353.0L886.0 363.0M931.0 337.0L931.0 347.0M681.0 430.0L681.0 440.0" stroke="#505050" stroke-width="2" fill="none"/>
<line x1="776.5" y1="356.3" x2="826.2" y2="387.9" stroke="#30d030" stroke-width="1.3"/>
<line x1="827" y1="388.8" x2="882.6" y2="368.8" stroke="#1a1ad0" stroke-width="1.3"/>
<line x1="832" y1="347.7" x2="829" y2="373.5" stroke="#e03030" stroke-width="1" stroke-dasharray="1 4"/></svg>
<div id="vpb" class="a"></div>
<svg class="a" style="left:214px;top:594px" width="30" height="8"><path d="M4 6 L6.5 3 L9 6 Z" fill="#000"/><path d="M15 3 L20 3 L17.5 6 Z" fill="#000"/></svg>
<!-- CONSOLE -->
<div id="con" class="a"></div>
<div id="conin" class="a"></div>
<div id="conb" class="a"></div>
<svg class="a" style="left:1336px;top:602px" width="15" height="91"><rect x="0" y="0" width="16" height="90" fill="#f0f0f0"/><rect x="0" y="62" width="15" height="11" fill="#cdcdcd"/><path d="M4.5 11 L8 7.5 L11.5 11" fill="none" stroke="#606060" stroke-width="1.6"/><path d="M4.5 80 L8 83.5 L11.5 80" fill="none" stroke="#606060" stroke-width="1.6"/></svg>
<div class="t" style="left:219px;top:602px;font-size:12px;color:#858585;letter-spacing:0.14px">Error in script file 'script_waveguide.nfs', line: 4.</div>
<div class="t cmd" style="top:615px">command&gt;</div>
<div class="t cmd" style="top:630px">command&gt;</div>
<div class="t cmd" style="top:645px">command&gt;</div>
<div class="t cmd" style="top:660px">command&gt;</div>
<div class="t cmd" style="top:675px">command&gt;</div>
<!-- STATUS -->
<div id="status" class="a"></div>
<div class="t st" style="left:20px">X:</div><div class="t st" style="left:37px">-54.005836</div>
<div class="t st" style="left:122px">Y:</div><div class="t st" style="left:139px">-42.879924</div>
<div class="t st" style="left:224px">Z:</div><div class="t st" style="left:241px">50.111577</div>
<div class="combo" style="left:320px;width:85px"><span>Centimeters</span><svg style="left:70px" width="10" height="6"><path d="M1 1 L5 5 L9 1" fill="none" stroke="#404040" stroke-width="1.1"/></svg></div>
<div class="a" style="left:424px;top:703px;width:1px;height:20px;background:#f4f6f8"></div>
<div class="t st" style="left:440px">Pick:</div>
<div class="combo" style="left:467px;width:134px"><span>PICK_NEAR</span><svg style="left:119px" width="10" height="6"><path d="M1 1 L5 5 L9 1" fill="none" stroke="#404040" stroke-width="1.1"/></svg></div>
<div class="t st" style="left:619px">Selection:</div>
<div class="combo" style="left:672px;width:130px"><span>SELECTION_ALL</span><svg style="left:116px" width="10" height="6"><path d="M1 1 L5 5 L9 1" fill="none" stroke="#404040" stroke-width="1.1"/></svg></div>
<div class="a" style="left:822px;top:703px;width:1px;height:20px;background:#f4f6f8"></div>
<div class="a" style="left:1043px;top:704px;width:299px;height:15px;background:#e6e6e6;border-left:2px solid #1e6ec8"></div>
<div class="t" style="left:1177px;top:706px;font-size:11px;color:#2060b0">Done.</div>
</body></html>
